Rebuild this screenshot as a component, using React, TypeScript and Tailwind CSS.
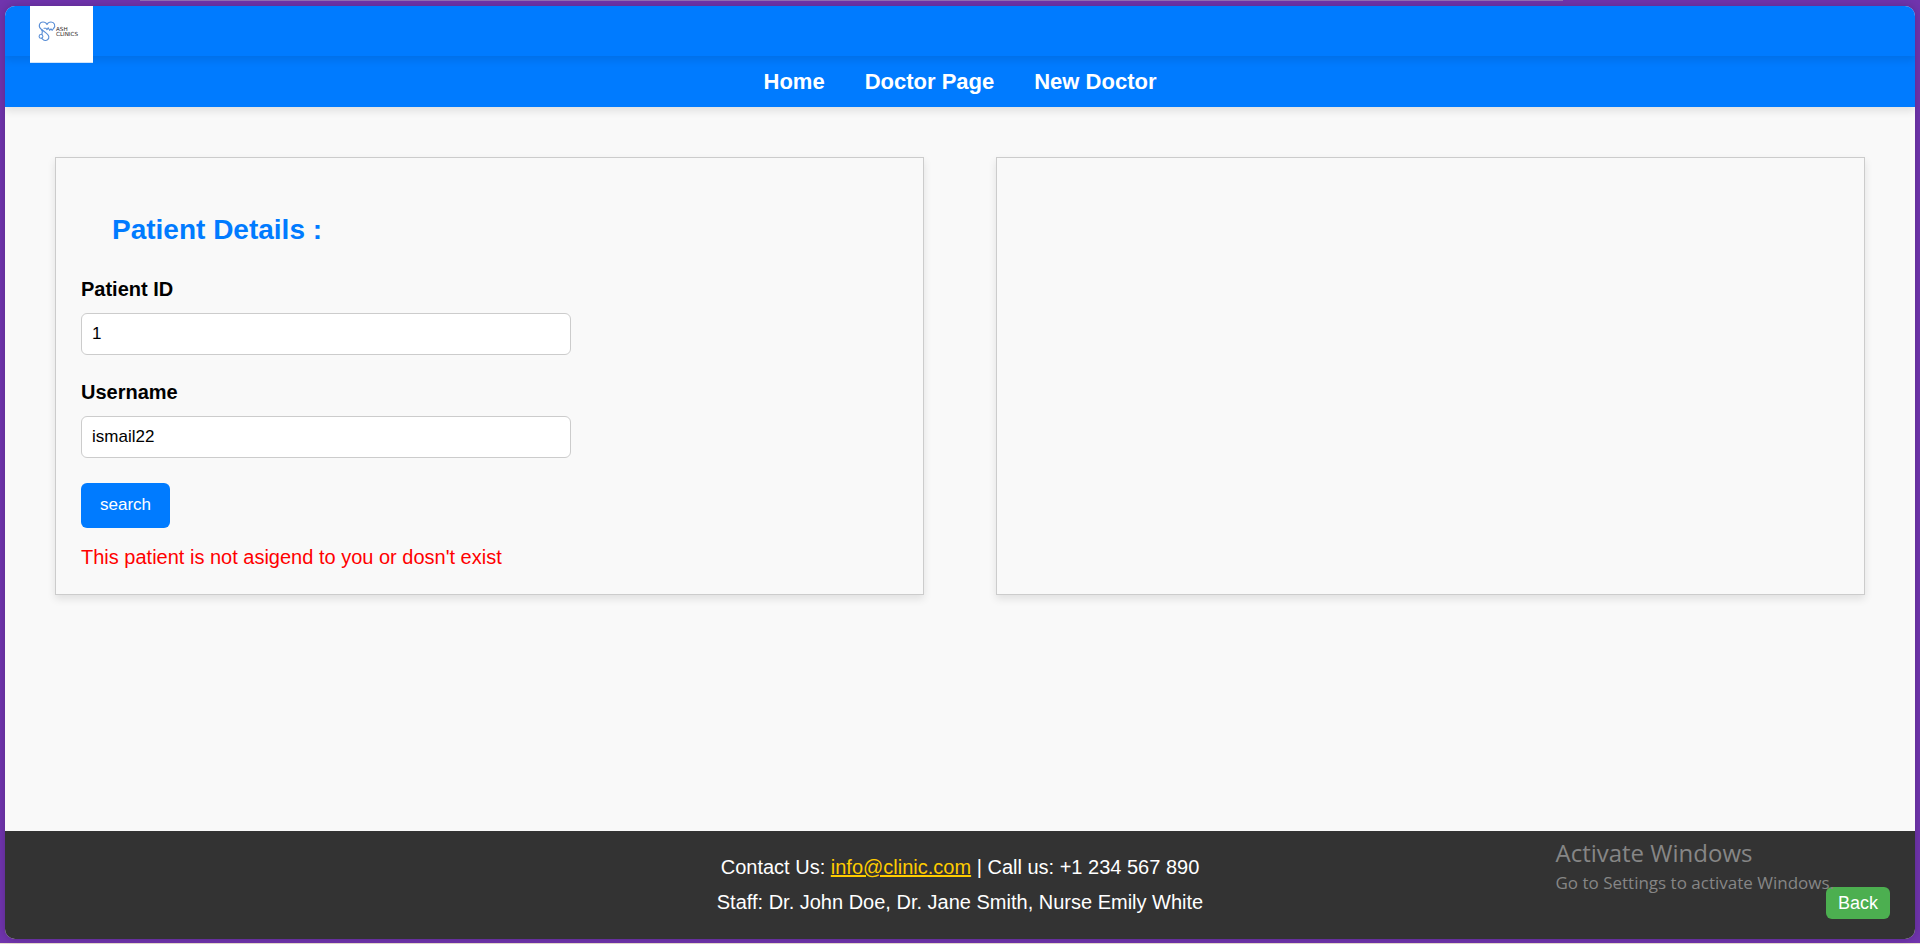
const navLinks = ["Home", "Doctor Page", "New Doctor"];

function Logo() {
  return (
    <a href="#home" aria-label="ASH Clinics" className="relative z-10 ml-[25px] flex h-[57px] w-[63px] items-start border-b border-[#cfe4fb] bg-white pt-[15px] pl-2">
      <svg width="50" height="24" viewBox="0 0 50 24" fill="none" stroke="#5b8fd6" strokeWidth="1.1" strokeLinecap="round" strokeLinejoin="round">
        <path d="M3.500 8.500 C-0.500 5.500 1.500 1 5 1 C7 1 8.300 2 9 3.500 C9.700 2 11 1 13 1 C16.500 1 18 5 15.500 7.500" />
        <path d="M6 7.200 H8 L9 8.600 L10.200 6.800 L11.600 9.300 L13 7.800 L14.200 9.300 L15.500 7.500" />
        <path d="M3.500 8.500 C6 10.500 10 12.500 10.800 15.500 C11.300 18 9 19.700 7 19.500 C4.800 19.300 4.500 17.800 3.600 17.200" />
        <path d="M3.500 8.500 C5 10 4.500 11.500 3.800 13.500" />
        <circle cx="3" cy="15.400" r="1.900" />
        <text x="18" y="10" fontSize="5.6" fill="#2c2326" stroke="none" className="font-['DejaVu_Sans',sans-serif]">ASH</text>
        <text x="18" y="15" fontSize="5.6" fill="#2c2326" stroke="none" className="font-['DejaVu_Sans',sans-serif]">CLINICS</text>
      </svg>
    </a>
  );
}

function Field({ id, label, value }: { id: string; label: string; value: string }) {
  return (
    <div className="mb-[25px]">
      <label htmlFor={id} className="mb-3 block text-[20px] leading-6 font-bold">{label}</label>
      <input id={id} defaultValue={value} className="block h-[42px] w-full max-w-[490px] rounded-[6px] border border-[#ccc] bg-white px-2.5 text-[17px]" />
    </div>
  );
}

export default function App() {
  return (
    <div className="relative flex min-h-screen flex-col border-b border-[#e8dcd0] bg-[#7034ad] px-[5px] pt-1.5 pb-1 font-['Liberation_Sans',Arial,sans-serif] text-black">
      <div className="absolute top-0 right-[18.6%] left-[7.3%] h-px bg-[#9270b4]" />
      <div className="relative flex flex-1 flex-col overflow-hidden rounded-[10px] bg-[#f9f9f9] shadow-[0_0_8px_rgba(0,0,0,0.2)]">
        <header className="relative z-20 h-[50px] bg-[#007bff] shadow-[0_4px_8px_rgba(0,0,0,0.1)]">
          <Logo />
        </header>
        <nav className="relative z-10 flex h-[51px] items-center justify-center gap-10 bg-[#007bff] text-[22px] font-bold text-white shadow-[0_4px_8px_rgba(0,0,0,0.1)]">
          {navLinks.map((link) => (
            <a key={link} href="#">{link}</a>
          ))}
        </nav>
        <main className="grid flex-1 grid-cols-2 content-start items-stretch gap-[72px] p-[50px]">
          <section className="border border-[#ccc] px-[25px] pt-[56px] pb-[25px] shadow-[0_4px_8px_rgba(0,0,0,0.1)]">
            <h1 className="mb-[31px] pl-[31px] text-[28px] leading-8 font-bold text-[#007bff]">Patient Details :</h1>
            <form onSubmit={(e) => e.preventDefault()}>
              <Field id="patient-id" label="Patient ID" value="1" />
              <Field id="username" label="Username" value="ismail22" />
              <button type="submit" className="block h-[45px] rounded-[6px] bg-[#007bff] px-[19px] pb-0.5 text-[17px] text-white">search</button>
            </form>
            <p className="mt-[17px] text-[20px] leading-6 text-[#f00]">This patient is not asigend to you or dosn't exist</p>
          </section>
          <section className="border border-[#ccc] shadow-[0_4px_8px_rgba(0,0,0,0.1)]" />
        </main>
        <footer className="bg-[#333] py-[19px] text-center text-[20px] leading-[35px] text-white">
          <p>
            Contact Us: <a href="mailto:info@clinic.com" className="text-[#ffcc00] underline">info@clinic.com</a> | Call us: +1 234 567 890
          </p>
          <p>Staff: Dr. John Doe, Dr. Jane Smith, Nurse Emily White</p>
        </footer>
        <button type="button" className="absolute right-[25px] bottom-5 h-8 rounded-[6px] bg-[#4caf50] px-3 text-[18px] text-white">Back</button>
        <div className="pointer-events-none absolute right-[81px] bottom-[42px] font-['Open_Sans','Noto_Sans',sans-serif] whitespace-nowrap text-[#868686]">
          <p className="text-[24px] leading-8">Activate Windows</p>
          <p className="text-[17px] leading-7">Go to Settings to activate Windows.</p>
        </div>
      </div>
    </div>
  );
}
